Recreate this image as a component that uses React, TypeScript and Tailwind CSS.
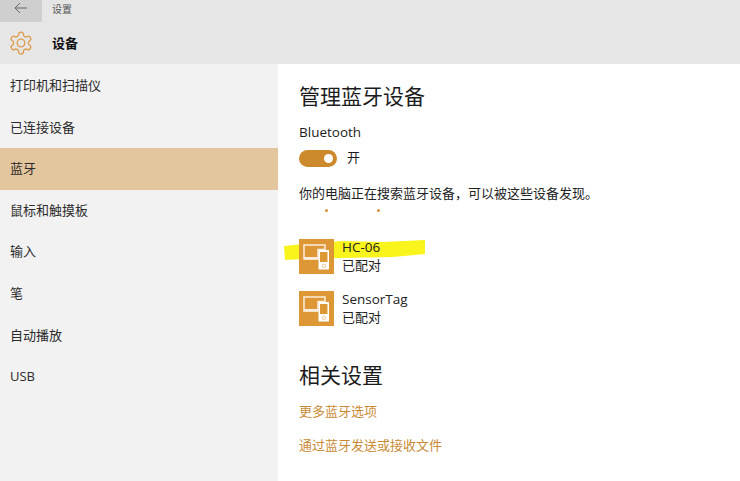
const font = { fontFamily: '"Open Sans","Noto Sans CJK SC",sans-serif' };

function DeviceIcon() {
  return (
    <svg width="35" height="35" viewBox="0 0 35 35" className="shrink-0">
      <rect width="35" height="35" fill="#dd9735" />
      <path d="M5 6H26V10.5H19V20H5Z" fill="none" stroke="#fbeedd" strokeWidth="1.5" />
      <rect x="5" y="18" width="14" height="2.5" fill="#fbeedd" />
      <rect x="19.5" y="11" width="10.5" height="19.5" fill="#fff" />
      <rect x="21" y="13" width="7.5" height="10" fill="#dd9735" />
      <circle cx="25" cy="26.8" r="1.7" fill="none" stroke="#eebd80" strokeWidth="0.8" />
    </svg>
  );
}

const items = ["打印机和扫描仪", "已连接设备", "蓝牙", "鼠标和触摸板", "输入", "笔", "自动播放", "USB"];

function Device({ name, highlight }: { name: string; highlight?: boolean }) {
  return (
    <div className="flex items-center gap-[8px] h-[35px] relative">
      {highlight && (
        <svg width="144" height="22" viewBox="0 0 144 22" className="absolute left-[-16px] top-[0px]">
          <path d="M1 7 L20 5 L60 2 L100 3 L142 1 L142 15 L110 18 L60 19 L20 20 L2 21 Z" fill="#f9f41c" />
        </svg>
      )}
      <div className="relative"><DeviceIcon /></div>
      <div className="relative pb-[2px] text-[13px] leading-[18px] text-[#222]">
        <div className="text-[13.5px]">{name}</div>
        <div>已配对</div>
      </div>
    </div>
  );
}

export default function App() {
  return (
    <div style={font} className="w-[740px] h-[481px] overflow-hidden bg-white flex flex-col text-[#1c1c1c]">
      <header className="h-[64px] bg-[#e6e6e6] shrink-0">
        <div className="flex items-start h-[22px]">
          <div className="w-[42px] h-[22px] bg-[#cfcfcf] flex justify-center pt-[2px]">
            <svg width="14" height="12" viewBox="0 0 14 12" fill="none" stroke="#666" strokeWidth="1">
              <path d="M13 6H1M6 1L1 6l5 5" />
            </svg>
          </div>
          <span className="ml-[10px] mt-[1px] text-[10px] leading-[16px] text-[#555]">设置</span>
        </div>
        <div className="flex items-center h-[42px] pl-[8px]">
          <svg width="26" height="26" viewBox="0 0 24 24" fill="none" stroke="#de9c4b" strokeWidth="1.2" strokeLinejoin="round">
            <path d="M12.22 2h-.44a2 2 0 0 0-2 2v.18a2 2 0 0 1-1 1.73l-.43.25a2 2 0 0 1-2 0l-.15-.08a2 2 0 0 0-2.73.73l-.22.38a2 2 0 0 0 .73 2.73l.15.1a2 2 0 0 1 1 1.72v.51a2 2 0 0 1-1 1.74l-.15.09a2 2 0 0 0-.73 2.73l.22.38a2 2 0 0 0 2.73.73l.15-.08a2 2 0 0 1 2 0l.43.25a2 2 0 0 1 1 1.73V20a2 2 0 0 0 2 2h.44a2 2 0 0 0 2-2v-.18a2 2 0 0 1 1-1.73l.43-.25a2 2 0 0 1 2 0l.15.08a2 2 0 0 0 2.73-.73l.22-.39a2 2 0 0 0-.73-2.73l-.15-.08a2 2 0 0 1-1-1.74v-.5a2 2 0 0 1 1-1.74l.15-.09a2 2 0 0 0 .73-2.73l-.22-.38a2 2 0 0 0-2.73-.73l-.15.08a2 2 0 0 1-2 0l-.43-.25a2 2 0 0 1-1-1.73V4a2 2 0 0 0-2-2z" />
            <circle cx="12" cy="12" r="3.5" />
          </svg>
          <span className="ml-[18px] pt-[2px] text-[13px] font-bold text-[#111]">设备</span>
        </div>
      </header>
      <div className="flex flex-1 min-h-0">
        <nav className="w-[278px] shrink-0 bg-[#f2f2f2] pt-[1px]">
          {items.map((t) => (
            <div key={t} className={`h-[41.6px] flex items-center pl-[10px] text-[13px] text-[#2b2b2b] ${t === "蓝牙" ? "bg-[#e3c59e]" : ""}`}>
              {t}
            </div>
          ))}
        </nav>
        <main className="flex-1 pl-[21px] pt-[17px]">
          <h1 className="text-[21px] leading-[30px] font-normal text-[#1c1c1c]">管理蓝牙设备</h1>
          <div className="mt-[11px] text-[13.5px] leading-[20px]">Bluetooth</div>
          <div className="flex items-center mt-[7px] h-[18px]">
            <div className="w-[38px] h-[17px] rounded-full bg-[#cd8a2c] flex items-center justify-end pr-[4px]">
              <div className="w-[9px] h-[9px] rounded-full bg-white" />
            </div>
            <span className="ml-[10px] text-[13px]">开</span>
          </div>
          <p className="mt-[16px] text-[13px] leading-[20px] text-[#222]">你的电脑正在搜索蓝牙设备，可以被这些设备发现。</p>
          <div className="flex gap-[49px] ml-[26px] mt-[6px] h-[3px]">
            <div className="w-[3px] h-[3px] rounded-full bg-[#d88f35]" />
            <div className="w-[3px] h-[3px] rounded-full bg-[#d88f35]" />
          </div>
          <div className="mt-[27px] flex flex-col gap-[17px]">
            <Device name="HC-06" highlight />
            <Device name="SensorTag" />
          </div>
          <h2 className="mt-[34px] text-[21px] leading-[30px] font-normal">相关设置</h2>
          <div className="mt-[11px] text-[13px] leading-[20px] text-[#c98a35]">更多蓝牙选项</div>
          <div className="mt-[14px] text-[13px] leading-[20px] text-[#c98a35]">通过蓝牙发送或接收文件</div>
        </main>
      </div>
    </div>
  );
}
